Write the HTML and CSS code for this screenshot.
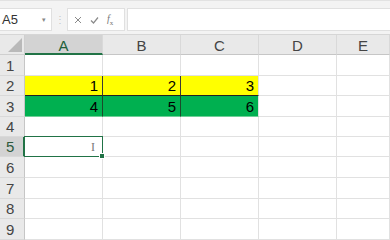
FILE: index.html
```html
<!DOCTYPE html>
<html lang="en">
<head>
    <meta charset="UTF-8">
    <title>Sheet1</title>
    <link rel="stylesheet" href="styles.css">
</head>
<body>
    <!-- Formula bar -->
    <div class="formula-bar">
        <div class="name-box">
            <span>A5</span>
            <span class="caret">&#9662;</span>
        </div>
        <div class="grip">&#8942;</div>
        <div class="fx-buttons">
            <svg width="8" height="8" viewBox="0 0 8 8"><path d="M1 1L7 7M7 1L1 7" stroke="#8a8a8a" stroke-width="1" fill="none"/></svg>
            <svg width="9" height="8" viewBox="0 0 9 8"><path d="M1 4.5L3.5 7L8 1.5" stroke="#8a8a8a" stroke-width="1.2" fill="none"/></svg>
            <span class="fx"><i>f</i><sub>x</sub></span>
        </div>
        <div class="formula-input"></div>
    </div>

    <!-- Grid -->
    <div class="sheet">
        <div class="corner"><span class="tri"></span></div>
        <div class="col-head selected">A</div>
        <div class="col-head">B</div>
        <div class="col-head">C</div>
        <div class="col-head">D</div>
        <div class="col-head">E</div>

        <div class="row-head">1</div>
        <div class="cell"></div><div class="cell"></div><div class="cell"></div><div class="cell"></div><div class="cell"></div>

        <div class="row-head">2</div>
        <div class="cell yellow">1</div><div class="cell yellow">2</div><div class="cell yellow last">3</div><div class="cell"></div><div class="cell"></div>

        <div class="row-head">3</div>
        <div class="cell green">4</div><div class="cell green">5</div><div class="cell green last">6</div><div class="cell"></div><div class="cell"></div>

        <div class="row-head">4</div>
        <div class="cell"></div><div class="cell"></div><div class="cell"></div><div class="cell"></div><div class="cell"></div>

        <div class="row-head selected">5</div>
        <div class="cell active"><span class="ibeam">I</span><span class="handle"></span></div><div class="cell"></div><div class="cell"></div><div class="cell"></div><div class="cell"></div>

        <div class="row-head">6</div>
        <div class="cell"></div><div class="cell"></div><div class="cell"></div><div class="cell"></div><div class="cell"></div>

        <div class="row-head">7</div>
        <div class="cell"></div><div class="cell"></div><div class="cell"></div><div class="cell"></div><div class="cell"></div>

        <div class="row-head">8</div>
        <div class="cell"></div><div class="cell"></div><div class="cell"></div><div class="cell"></div><div class="cell"></div>

        <div class="row-head">9</div>
        <div class="cell"></div><div class="cell"></div><div class="cell"></div><div class="cell"></div><div class="cell"></div>
    </div>
</body>
</html>
```

FILE: styles.css
```css
body {
    margin: 0;
    width: 390px;
    height: 240px;
    overflow: hidden;
    background: #fff;
    font-family: "Liberation Sans", Arial, sans-serif;
}

/* Formula bar */
.formula-bar {
    height: 35px;
    box-sizing: border-box;
    padding-top: 7px;
    background: #f3f3f3;
    border-top: 1px solid #e2e2e2;
    display: flex;
    align-items: flex-start;
}

.name-box {
    width: 52px;
    height: 23px;
    box-sizing: border-box;
    background: #fff;
    border: 1px solid #e0e0e0;
    border-left: none;
    display: flex;
    align-items: center;
    justify-content: space-between;
    padding: 0 5px 0 2px;
    font-size: 13px;
    color: #333;
}

.name-box .caret {
    font-size: 7px;
    color: #888;
}

.grip {
    width: 15px;
    height: 23px;
    line-height: 23px;
    text-align: center;
    font-size: 10px;
    color: #c4c4c4;
}

.fx-buttons {
    width: 58px;
    height: 23px;
    box-sizing: border-box;
    background: #fff;
    border: 1px solid #e0e0e0;
    display: flex;
    align-items: center;
    gap: 8px;
    padding-left: 6px;
}

.fx {
    font-family: "Liberation Serif", serif;
    font-size: 10px;
    color: #777;
}

.fx sub {
    font-size: 7px;
}

.formula-input {
    flex: 1;
    height: 23px;
    box-sizing: border-box;
    margin-left: 2px;
    background: #fff;
    border: 1px solid #e0e0e0;
    border-right: none;
}

/* Sheet grid */
.sheet {
    display: grid;
    grid-template-columns: 25px 78px 78px 78px 78px 1fr;
    grid-template-rows: 20px 21px 20px 21px 20px 20px 21px 21px 20px 21px;
    border-top: 1px solid #d6d6d6;
    margin-top: -1px;
}

.corner,
.col-head,
.row-head {
    background: #e9e9e9;
    box-sizing: border-box;
    color: #444;
}

.corner {
    position: relative;
    border-right: 1px solid #cfcfcf;
    border-bottom: 1px solid #cfcfcf;
}

.corner .tri {
    position: absolute;
    right: 2px;
    bottom: 2px;
    width: 0;
    height: 0;
    border-left: 14px solid transparent;
    border-bottom: 14px solid #b9b9b9;
}

.col-head {
    border-right: 1px solid #d9d9d9;
    border-bottom: 1px solid #c6c6c6;
    text-align: center;
    font-size: 15px;
    line-height: 21px;
}

.col-head.selected {
    background: #d3d3d3;
    color: #21603a;
    border-bottom: 2px solid #217346;
}

.row-head {
    border-right: 1px solid #c6c6c6;
    border-bottom: 1px solid #d9d9d9;
    font-size: 15px;
    padding-left: 6px;
    display: flex;
    align-items: center;
}

.row-head.selected {
    background: #d3d3d3;
    color: #2e5a3d;
    border-right: 2px solid #217346;
}

.cell {
    box-sizing: border-box;
    border-right: 1px solid #e1e1e1;
    border-bottom: 1px solid #e1e1e1;
    font-size: 15px;
    color: #000;
    padding: 0 4px 1px 0;
    display: flex;
    align-items: flex-end;
    justify-content: flex-end;
}

.cell.yellow {
    background: #ffff00;
    border-right-color: #3a3a3a;
    border-bottom-color: #222;
}

.cell.green {
    background: #00b050;
    border-right-color: #1c4a2a;
    border-bottom-color: #6fcf97;
}

.cell.yellow.last,
.cell.green.last {
    border-right-color: #e1e1e1;
}

.cell.active {
    position: relative;
}

.cell.active::before {
    content: "";
    position: absolute;
    left: -1px;
    top: -1px;
    right: -1px;
    bottom: -1px;
    border: 1px solid #217346;
}

.ibeam {
    font-family: "Liberation Serif", serif;
    font-size: 12px;
    color: #777;
    margin-right: 3px;
}

.handle {
    position: absolute;
    right: -3px;
    bottom: -3px;
    width: 4px;
    height: 4px;
    background: #217346;
    border: 1px solid #fff;
}
```
